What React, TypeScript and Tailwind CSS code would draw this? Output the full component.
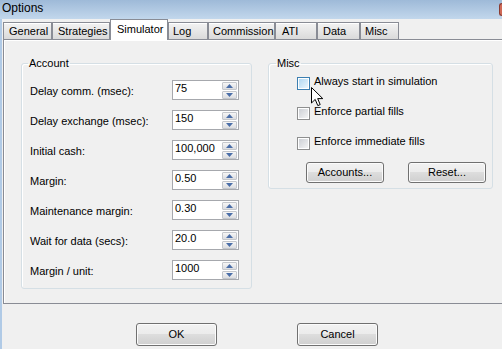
import React from 'react';

const tabs = [
  { label: 'General', cls: 'w-[49px] pl-[5px]' },
  { label: 'Strategies', cls: 'w-[58px] pl-[5px]' },
  { label: 'Simulator', cls: 'w-[58px] pl-[6px]', active: true },
  { label: 'Log', cls: 'w-[40px] pl-[4px]' },
  { label: 'Commission', cls: 'w-[67px] pl-[4px]' },
  { label: 'ATI', cls: 'w-[42px] pl-[6px]' },
  { label: 'Data', cls: 'w-[43px] pl-[5px]' },
  { label: 'Misc', cls: 'w-[39px] pl-[4px]' },
];

const fields = [
  { label: 'Delay comm. (msec):', value: '75' },
  { label: 'Delay exchange (msec):', value: '150' },
  { label: 'Initial cash:', value: '100,000' },
  { label: 'Margin:', value: '0.50' },
  { label: 'Maintenance margin:', value: '0.30' },
  { label: 'Wait for data (secs):', value: '20.0' },
  { label: 'Margin / unit:', value: '1000' },
];

const checks = [
  { label: 'Always start in simulation', hover: true },
  { label: 'Enforce partial fills' },
  { label: 'Enforce immediate fills' },
];

const SpinHalf = ({ up }: { up?: boolean }) => (
  <div className="h-[8px] flex items-center justify-center border border-[#c4c7cc] rounded-[1px] bg-gradient-to-b from-[#f6f6f6] to-[#dcdde0]">
    <svg width="7" height="4" viewBox="0 0 7 4">
      {up ? <path d="M3.5 0 L7 4 L0 4 Z" fill="#4b6ea8" /> : <path d="M0 0 L7 0 L3.5 4 Z" fill="#4b6ea8" />}
    </svg>
  </div>
);

const SpinInput = ({ value }: { value: string }) => (
  <div className="w-[67px] h-[20px] flex border border-[#a6a8ad] bg-white">
    <div className="flex-1 pl-[2px] pt-[1px]">{value}</div>
    <div className="w-[15px] flex flex-col gap-[1px] mt-[1px] mr-[1px]">
      <SpinHalf up />
      <SpinHalf />
    </div>
  </div>
);

const CheckBox = ({ hover }: { hover?: boolean }) => (
  <div className={hover ? 'mt-[2px] w-[13px] h-[13px] border border-[#3c7fb1] bg-white p-[1px]' : 'mt-[2px] w-[13px] h-[13px] border border-[#8e8f8f] bg-white p-[1px]'}>
    <div className={hover ? 'w-full h-full bg-gradient-to-br from-[#b1d8f2] to-[#eaf6fd]' : 'w-full h-full bg-gradient-to-br from-[#cdd0d5] to-[#f4f4f4]'} />
  </div>
);

const WinButton = ({ label, cls }: { label: string; cls: string }) => (
  <div className={`${cls} flex items-center justify-center border border-[#707070] rounded-[3px] shadow-[inset_0_0_0_1px_#fbfbfb] bg-[linear-gradient(#f2f2f2,#ebebeb_50%,#dddddd_50%,#cfcfcf)]`}>
    {label}
  </div>
);

export default function App() {
  return (
    <div className="relative w-[502px] h-[349px] overflow-hidden bg-[#f0f0f0] text-black text-[11px] leading-[13px] [font-family:'Liberation_Sans',Arial,sans-serif]">
      {/* title bar */}
      <div className="h-[19px] flex justify-between bg-gradient-to-b from-[#9ebad8] to-[#c2d7ec]">
        <span className="pl-[2px] pt-[1px] text-[12px] leading-[14px]">Options</span>
        <div className="w-[3px] h-[13px] mt-[3px] rounded-l-[3px] border-l border-y border-[#8a3b31] bg-[#cf6a58]" />
      </div>

      <div className="flex h-[330px]">
        <div className="w-[2px] shrink-0 bg-[#b0cae6]" />
        <div className="flex-1 min-w-0 pl-[1px]">
          {/* tabs */}
          <div className="h-[20px] flex items-end">
            {tabs.map((t) =>
              t.active ? (
                <div key={t.label} className={`${t.cls} shrink-0 relative z-10 h-[21px] -mb-[1px] pt-[3px] border-t border-x border-[#898c95] bg-white`}>
                  {t.label}
                </div>
              ) : (
                <div key={t.label} className={`${t.cls} shrink-0 h-[17px] pt-[2px] border-t border-x border-[#898c95] bg-gradient-to-b from-[#f3f3f3] to-[#dadada] shadow-[inset_0_1px_0_#fff]`}>
                  {t.label}
                </div>
              )
            )}
          </div>

          {/* panel */}
          <div className="w-[510px] h-[265px] border border-[#898c95] bg-[#f0f0f0] shadow-[inset_1px_1px_0_#fff] pl-[17px] pt-[17px] flex items-start gap-[16px]">
            <fieldset className="w-[231px] shrink-0 border border-[#d5dfe5] rounded-[3px] shadow-[inset_1px_1px_0_#fff]">
              <legend className="ml-[6px] px-[1px]">Account</legend>
              <div className="flex flex-col gap-[10px] pt-[10px] pb-[8px] pl-[8px]">
                {fields.map((f) => (
                  <div key={f.label} className="flex">
                    <div className="w-[142px] pt-[5px]">{f.label}</div>
                    <SpinInput value={f.value} />
                  </div>
                ))}
              </div>
            </fieldset>

            <fieldset className="w-[225px] shrink-0 border border-[#d5dfe5] rounded-[3px] shadow-[inset_1px_1px_0_#fff]">
              <legend className="ml-[7px] px-[1px]">Misc</legend>
              <div className="pl-[28px] pt-[5px] pb-[5px]">
                <div className="flex flex-col gap-[15px]">
                  {checks.map((c) => (
                    <div key={c.label} className="flex items-start gap-[4px]">
                      <CheckBox hover={c.hover} />
                      <span>{c.label}</span>
                    </div>
                  ))}
                </div>
                <div className="flex gap-[24px] pl-[9px] mt-[12px]">
                  <WinButton label="Accounts..." cls="w-[78px] h-[21px]" />
                  <WinButton label="Reset..." cls="w-[78px] h-[21px]" />
                </div>
              </div>
            </fieldset>
          </div>

          {/* dialog buttons */}
          <div className="flex gap-[80px] ml-[133px] mt-[19px]">
            <WinButton label="OK" cls="w-[81px] h-[23px]" />
            <WinButton label="Cancel" cls="w-[81px] h-[23px]" />
          </div>
        </div>
      </div>

      {/* mouse pointer */}
      <svg className="absolute left-[311px] top-[87px]" width="13" height="20" viewBox="0 0 13 20">
        <path d="M0.5 0.5 L0.5 16 L4.2 12.4 L6.8 18.6 L9.2 17.6 L6.7 11.6 L11.8 11.6 Z" fill="#fff" stroke="#000" strokeWidth="1" strokeLinejoin="round" />
      </svg>
    </div>
  );
}
